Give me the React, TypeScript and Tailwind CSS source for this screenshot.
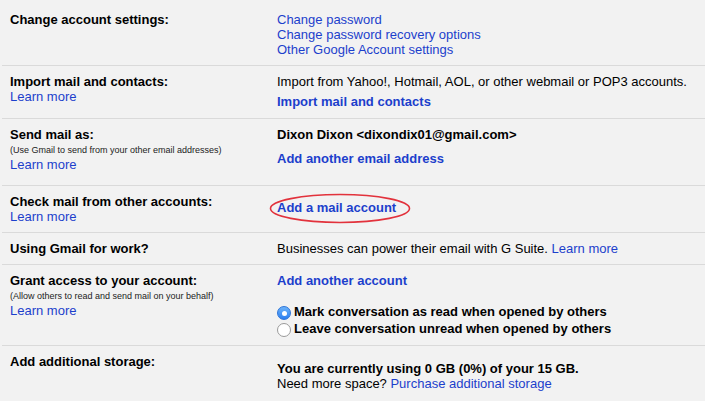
import React from 'react';

const link = 'text-[#1c3fcc] cursor-pointer hover:underline';

const Label: React.FC<{ title: string; note?: string; learn?: boolean }> = ({ title, note, learn }) => (
  <div className="w-[275px] shrink-0 pl-[8px]">
    <div className="font-bold text-black">{title}</div>
    {note && <div className="text-[9px] leading-[14px] pt-[1px] text-[#222]">{note}</div>}
    {learn && <div className={link}>Learn more</div>}
  </div>
);

const Radio: React.FC<{ checked?: boolean; label: string }> = ({ checked, label }) => (
  <label className="flex items-center h-[17px] font-bold text-black">
    {checked ? (
      <span className="w-[14px] h-[14px] rounded-full bg-gradient-to-b from-[#6cb3fa] to-[#2a7ef0] border border-[#2d74d8] flex items-center justify-center mt-[3px]">
        <span className="w-[5px] h-[5px] rounded-full bg-white" />
      </span>
    ) : (
      <span className="w-[14px] h-[14px] rounded-full bg-white border border-[#9a9a9a] mt-[3px]" />
    )}
    <span className="ml-[3px]">{label}</span>
  </label>
);

const App: React.FC = () => {
  return (
    <div className="w-[705px] h-[401px] overflow-hidden bg-[#f2f2f2] pl-[2px] text-[13px] leading-[15px] text-[#222] font-['Liberation_Sans',Arial,sans-serif]">
      {/* Change account settings */}
      <div className="flex border-b border-[#dadada] pt-[12px] pb-[8px]">
        <Label title="Change account settings:" />
        <div className="flex flex-col items-start">
          <span className={link}>Change password</span>
          <span className={link}>Change password recovery options</span>
          <span className={link}>Other Google Account settings</span>
        </div>
      </div>

      {/* Import */}
      <div className="flex border-b border-[#dadada] pt-[8px] pb-[9px]">
        <Label title="Import mail and contacts:" learn />
        <div>
          <div className="text-black">Import from Yahoo!, Hotmail, AOL, or other webmail or POP3 accounts.</div>
          <div className={`${link} font-bold mt-[5px]`}>Import mail and contacts</div>
        </div>
      </div>

      {/* Send mail as */}
      <div className="flex border-b border-[#dadada] pt-[8px] pb-[13px]">
        <Label title="Send mail as:" note="(Use Gmail to send from your other email addresses)" learn />
        <div>
          <div className="font-bold text-black">Dixon Dixon &lt;dixondix01@gmail.com&gt;</div>
          <div className={`${link} font-bold mt-[9px]`}>Add another email address</div>
        </div>
      </div>

      {/* Check mail */}
      <div className="flex border-b border-[#dadada] pt-[8px] pb-[8px]">
        <Label title="Check mail from other accounts:" learn />
        <div className="pt-[6px]">
          <span className="relative inline-block">
            <span className={`${link} font-bold`}>Add a mail account</span>
            <svg className="absolute left-[-8px] top-[-7px]" width="142" height="31" viewBox="0 0 142 31">
              <ellipse cx="71" cy="15.5" rx="69.5" ry="14" fill="none" stroke="#e2323c" strokeWidth="1.6" />
            </svg>
          </span>
        </div>
      </div>

      {/* Gmail for work */}
      <div className="flex border-b border-[#dadada] pt-[8px] pb-[8px]">
        <Label title="Using Gmail for work?" />
        <div className="text-black">
          Businesses can power their email with G Suite. <span className={link}>Learn more</span>
        </div>
      </div>

      {/* Grant access */}
      <div className="flex border-b border-[#dadada] pt-[8px] pb-[8px]">
        <Label title="Grant access to your account:" note="(Allow others to read and send mail on your behalf)" learn />
        <div>
          <div className={`${link} font-bold`}>Add another account</div>
          <div className="mt-[15px]">
            <Radio checked label="Mark conversation as read when opened by others" />
            <Radio label="Leave conversation unread when opened by others" />
          </div>
        </div>
      </div>

      {/* Storage */}
      <div className="flex pt-[8px]">
        <Label title="Add additional storage:" />
        <div className="pt-[7px]">
          <div className="font-bold text-black">You are currently using 0 GB (0%) of your 15 GB.</div>
          <div className="text-black">
            Need more space? <span className={link}>Purchase additional storage</span>
          </div>
        </div>
      </div>
    </div>
  );
};

export default App;
